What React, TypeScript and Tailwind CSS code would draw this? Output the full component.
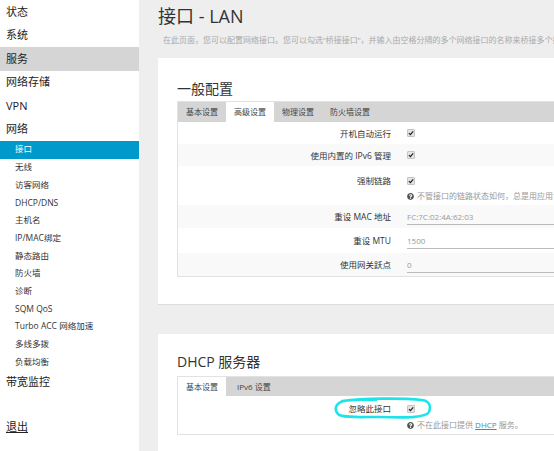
import React from "react";
import { FaQuestionCircle } from "react-icons/fa";

const font = { fontFamily: '"Open Sans", "Noto Sans CJK SC", sans-serif' };

function Check() {
  return (
    <span className="inline-flex items-center justify-center w-[8px] h-[8px] bg-[#e4e4e4] border border-[#c4c4c4] rounded-[1px]">
      <svg width="6" height="6" viewBox="0 0 10 10">
        <path d="M1.5 5.2 L4 7.6 L8.6 2.2" stroke="#222" strokeWidth="2" fill="none" />
      </svg>
    </span>
  );
}

function Help({ children }: { children: React.ReactNode }) {
  return (
    <div className="flex items-center gap-[3px] h-[12px] text-[8px] text-[#999] whitespace-nowrap">
      <FaQuestionCircle size={7} color="#555" />
      <span>{children}</span>
    </div>
  );
}

function Label({ children }: { children: React.ReactNode }) {
  return (
    <div className="w-[213px] shrink-0 text-right text-[8.5px] leading-[13px] text-[#333] whitespace-nowrap">
      {children}
    </div>
  );
}

function InputVal({ v, h }: { v: string; h: string }) {
  return (
    <div className={`w-[200px] ${h} border-b border-[#bbb] text-[8px] text-[#999] leading-[13px]`}>{v}</div>
  );
}

const top = "h-[23.5px] flex items-center pl-[6px] text-[11px] text-[#222]";
const sub = "h-[17.7px] flex items-center pl-[15px] text-[8.5px] text-[#333]";

export default function App() {
  return (
    <div className="flex w-[554px] h-[451px] overflow-hidden bg-[#eeeeee]" style={font}>
      <aside className="w-[139px] shrink-0 bg-white flex flex-col">
        <div className={top}>状态</div>
        <div className={top}>系统</div>
        <div className={`${top} bg-[#d5d5d5]`}>服务</div>
        <div className={top}>网络存储</div>
        <div className={top}>VPN</div>
        <div className={top}>网络</div>
        <div className={`${sub} bg-[#0099cc] text-white`}>接口</div>
        <div className={sub}>无线</div>
        <div className={sub}>访客网络</div>
        <div className={sub}>DHCP/DNS</div>
        <div className={sub}>主机名</div>
        <div className={sub}>IP/MAC绑定</div>
        <div className={sub}>静态路由</div>
        <div className={sub}>防火墙</div>
        <div className={sub}>诊断</div>
        <div className={sub}>SQM QoS</div>
        <div className={sub}>Turbo ACC 网络加速</div>
        <div className={sub}>多线多拨</div>
        <div className={sub}>负载均衡</div>
        <div className={top}>带宽监控</div>
        <div className={`${top} mt-[21px]`}>
          <span className="underline">退出</span>
        </div>
      </aside>

      <main className="flex-1 min-w-0 pl-[19px]">
        <div className="h-[32px] flex items-center text-[18px] text-[#333] whitespace-nowrap">接口 - LAN</div>
        <div className="h-[16px] flex items-center pl-[5px] text-[8px] text-[#aaa] whitespace-nowrap">
          在此页面，您可以配置网络接口。您可以勾选“桥接接口”，并输入由空格分隔的多个网络接口的名称来桥接多个接口。
        </div>

        <section className="mt-[10px] w-[440px] bg-white border-b border-[#ddd] pl-[19px] pt-[20px] pb-[27px]">
          <div className="h-[20px] flex items-center text-[14px] text-[#333] mb-[3px]">一般配置</div>
          <div className="border border-[#e2e2e2]">
            <div className="h-[20px] bg-[#d5d5d5] flex text-[8px] text-[#444]">
              <div className="px-[8px] flex items-center">基本设置</div>
              <div className="px-[8px] flex items-center bg-white">高级设置</div>
              <div className="px-[8px] flex items-center">物理设置</div>
              <div className="px-[8px] flex items-center">防火墙设置</div>
            </div>
            <div className="h-[22px] flex items-center gap-[16px]">
              <Label>开机自动运行</Label>
              <Check />
            </div>
            <div className="h-[22px] flex items-center gap-[16px] bg-[#f9f9f9]">
              <Label>使用内置的 IPv6 管理</Label>
              <Check />
            </div>
            <div className="h-[39px] flex gap-[16px] pt-[8px]">
              <Label>强制链路</Label>
              <div className="flex flex-col">
                <div className="h-[13px] flex items-center"><Check /></div>
                <div className="mt-[3px]">
                  <Help>不管接口的链路状态如何，总是用应用设置（不推荐）。</Help>
                </div>
              </div>
            </div>
            <div className="h-[23px] flex items-start gap-[16px] bg-[#f9f9f9] pt-[5px]">
              <Label>重设 MAC 地址</Label>
              <InputVal v="FC:7C:02:4A:62:03" h="h-[15px]" />
            </div>
            <div className="h-[25px] flex items-start gap-[16px] pt-[6px]">
              <Label>重设 MTU</Label>
              <InputVal v="1500" h="h-[15px]" />
            </div>
            <div className="h-[23px] flex items-start gap-[16px] bg-[#f9f9f9] pt-[5px]">
              <Label>使用网关跃点</Label>
              <InputVal v="0" h="h-[15px]" />
            </div>
          </div>
        </section>

        <section className="mt-[29px] w-[440px] h-[200px] bg-white pl-[19px] pt-[17px]">
          <div className="h-[20px] flex items-center text-[14px] text-[#333] mb-[5px]">DHCP 服务器</div>
          <div className="border border-[#e2e2e2]">
            <div className="h-[19px] bg-[#d5d5d5] flex text-[8px] text-[#444]">
              <div className="px-[8px] flex items-center bg-white">基本设置</div>
              <div className="px-[11px] flex items-center">IPv6 设置</div>
            </div>
            <div className="relative h-[38px] flex gap-[16px] pt-[6px]">
              <Label>忽略此接口</Label>
              <div className="flex flex-col">
                <div className="h-[13px] flex items-center"><Check /></div>
                <div className="mt-[4px]">
                  <Help>
                    不在此接口提供 <span className="text-[#3a8fb5] underline">DHCP</span> 服务。
                  </Help>
                </div>
              </div>
              <svg
                className="absolute left-[156px] top-[1px]"
                width="98"
                height="23"
                viewBox="0 0 98 23"
                fill="none"
              >
                <path
                  d="M8 4 C 30 1, 70 1, 88 3 C 96 4, 97 10, 95 15 C 92 21, 70 21, 45 20 C 25 20, 8 21, 4 17 C 0 13, 1 6, 10 4 C 20 2, 35 3, 42 3"
                  stroke="#1fe3ea"
                  strokeWidth="2.6"
                  strokeLinecap="round"
                />
              </svg>
            </div>
          </div>
        </section>
      </main>
    </div>
  );
}
